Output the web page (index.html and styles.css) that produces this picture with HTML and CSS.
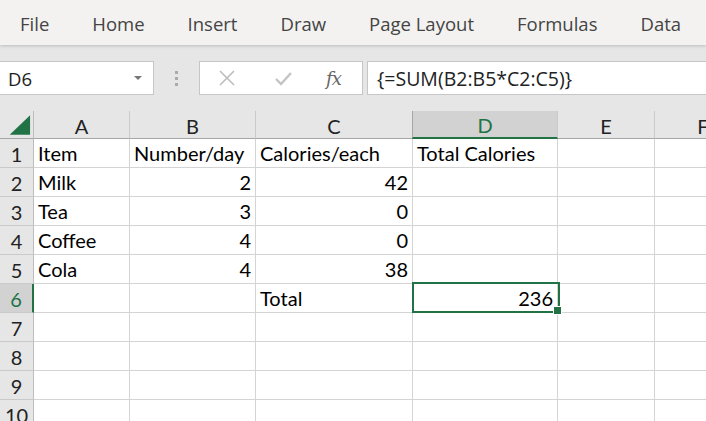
FILE: index.html
```html
<!DOCTYPE html>
<html>
<head>
<meta charset="utf-8">
<link rel="stylesheet" href="styles.css">
</head>
<body>
<div class="app">
  <div class="ribbon">
    <span class="tab">File</span>
    <span class="tab">Home</span>
    <span class="tab">Insert</span>
    <span class="tab">Draw</span>
    <span class="tab">Page Layout</span>
    <span class="tab">Formulas</span>
    <span class="tab">Data</span>
  </div>
  <div class="fbar">
    <div class="namebox">
      <span class="name">D6</span>
      <span class="caret"></span>
    </div>
    <div class="dots"><i></i><i></i><i></i></div>
    <div class="iconbox">
      <svg class="ico" width="18" height="18" viewBox="0 0 18 18"><path d="M2 2 L16 16 M16 2 L2 16" stroke="#bdbdbd" stroke-width="1.6" fill="none"/></svg>
      <svg class="ico" width="18" height="18" viewBox="0 0 18 18"><path d="M2 10 L7 15 L17 4" stroke="#c4c4c4" stroke-width="2.4" fill="none"/></svg>
      <span class="fx">fx</span>
    </div>
    <div class="input">{=SUM(B2:B5*C2:C5)}</div>
  </div>
  <div class="viewport">
  <div class="sheet">
    <div class="hd corner"><svg width="34" height="28" viewBox="0 0 34 28"><polygon points="10,24 31,24 31,4" fill="#217346"/></svg></div>
    <div class="hd col">A</div>
    <div class="hd col">B</div>
    <div class="hd col">C</div>
    <div class="hd col sel">D</div>
    <div class="hd col">E</div>
    <div class="hd col">F</div>

    <div class="hd row">1</div>
    <div class="c">Item</div><div class="c">Number/day</div><div class="c">Calories/each</div><div class="c">Total Calories</div><div class="c"></div><div class="c"></div>

    <div class="hd row">2</div>
    <div class="c">Milk</div><div class="c n">2</div><div class="c n">42</div><div class="c"></div><div class="c"></div><div class="c"></div>

    <div class="hd row">3</div>
    <div class="c">Tea</div><div class="c n">3</div><div class="c n">0</div><div class="c"></div><div class="c"></div><div class="c"></div>

    <div class="hd row">4</div>
    <div class="c">Coffee</div><div class="c n">4</div><div class="c n">0</div><div class="c"></div><div class="c"></div><div class="c"></div>

    <div class="hd row">5</div>
    <div class="c">Cola</div><div class="c n">4</div><div class="c n">38</div><div class="c"></div><div class="c"></div><div class="c"></div>

    <div class="hd row sel">6</div>
    <div class="c"></div><div class="c"></div><div class="c">Total</div><div class="c n active">236</div><div class="c"></div><div class="c"></div>

    <div class="hd row">7</div>
    <div class="c"></div><div class="c"></div><div class="c"></div><div class="c"></div><div class="c"></div><div class="c"></div>

    <div class="hd row">8</div>
    <div class="c"></div><div class="c"></div><div class="c"></div><div class="c"></div><div class="c"></div><div class="c"></div>

    <div class="hd row">9</div>
    <div class="c"></div><div class="c"></div><div class="c"></div><div class="c"></div><div class="c"></div><div class="c"></div>

    <div class="hd row">10</div>
    <div class="c"></div><div class="c"></div><div class="c"></div><div class="c"></div><div class="c"></div><div class="c"></div>
  </div>
  </div>
</div>
</body>
</html>
```

FILE: styles.css
```css
* { box-sizing: border-box; }
html, body { margin: 0; padding: 0; }
body { width: 706px; height: 421px; overflow: hidden; background: #fff; }
.app { width: 706px; height: 421px; overflow: hidden; display: flex; flex-direction: column; }

.ribbon {
  height: 45px; flex: none;
  background: #f3f2f1;
  display: flex; align-items: center; gap: 43px;
  padding-left: 20px; padding-top: 2px;
  font-family: "Open Sans", "Noto Sans", sans-serif;
  font-size: 18.5px; color: #444;
  position: relative; z-index: 2;
  box-shadow: 0 1px 3px rgba(0,0,0,0.18);
  white-space: nowrap;
}

.fbar {
  height: 66px; flex: none;
  background: #e6e6e6;
  display: flex; align-items: flex-start;
  padding-top: 16px;
}
.namebox {
  width: 154px; height: 34px;
  background: #fff; border: 1px solid #c6c6c6; border-left: none;
  display: flex; align-items: center; justify-content: space-between;
  padding: 0 11px 0 8px;
  font-family: "Open Sans", "Noto Sans", sans-serif; font-size: 18.5px; color: #222;
}
.caret { width: 0; height: 0; border-left: 4px solid transparent; border-right: 4px solid transparent; border-top: 4px solid #777; }
.dots { width: 45px; height: 34px; display: flex; flex-direction: column; align-items: center; justify-content: center; gap: 3px; }
.dots i { width: 3px; height: 3px; background: #aaa; display: block; }
.iconbox {
  width: 164px; height: 34px; margin-right: 4px;
  background: #fff; border: 1px solid #c6c6c6;
  display: flex; align-items: center;
  padding-left: 18px; gap: 38px;
}
.fx { font-family: "DejaVu Serif", "Liberation Serif", serif; font-style: italic; font-size: 18px; color: #666; margin-left: -4px; letter-spacing: -1px; }
.input {
  flex: 1; height: 34px;
  background: #fff; border: 1px solid #c6c6c6; border-right: none;
  display: flex; align-items: center; padding-left: 9px;
  font-family: "Open Sans", "Noto Sans", sans-serif; font-size: 19.5px; color: #222;
}

.viewport { flex: 1; overflow: hidden; }
.sheet {
  display: grid;
  width: 752px;
  grid-template-columns: 34px 96px 126px 157px 145px 97px 97px;
  grid-template-rows: 28px repeat(10, 29px);
  font-family: Lato, "Liberation Sans", sans-serif; font-size: 20px; color: #000;
}
.hd { background: #e6e6e6; color: #222; display: flex; align-items: center; justify-content: center; }
.corner { border-right: 1px solid #bdbdbd; border-bottom: 1px solid #a6a6a6; }
.col { border-right: 1px solid #cacaca; border-bottom: 1px solid #a6a6a6; padding-top: 2px; }
.col.sel { background: #d2d2d2; color: #217346; border-bottom: 2px solid #217346; border-left: 1px solid #a6a6a6; margin-left: -1px; }
.row { border-right: 1px solid #bdbdbd; border-bottom: 1px solid #cacaca; padding-top: 2px; }
.row.sel { background: #d2d2d2; color: #217346; border-right: 2px solid #217346; }
.c { border-right: 1px solid #d4d4d4; border-bottom: 1px solid #d4d4d4; display: flex; align-items: flex-end; padding: 0 4px 2px 4px; white-space: nowrap; overflow: visible; }
.c.n { justify-content: flex-end; }
.active { position: relative; }
.active::after {
  content: ""; position: absolute; left: -1px; top: -2px; right: -3px; bottom: -1px;
  border: 2px solid #217346;
}
.active::before {
  content: ""; position: absolute; right: -5px; bottom: -3px; width: 7px; height: 7px;
  background: #217346; border: 1px solid #fff; z-index: 1;
}
```
